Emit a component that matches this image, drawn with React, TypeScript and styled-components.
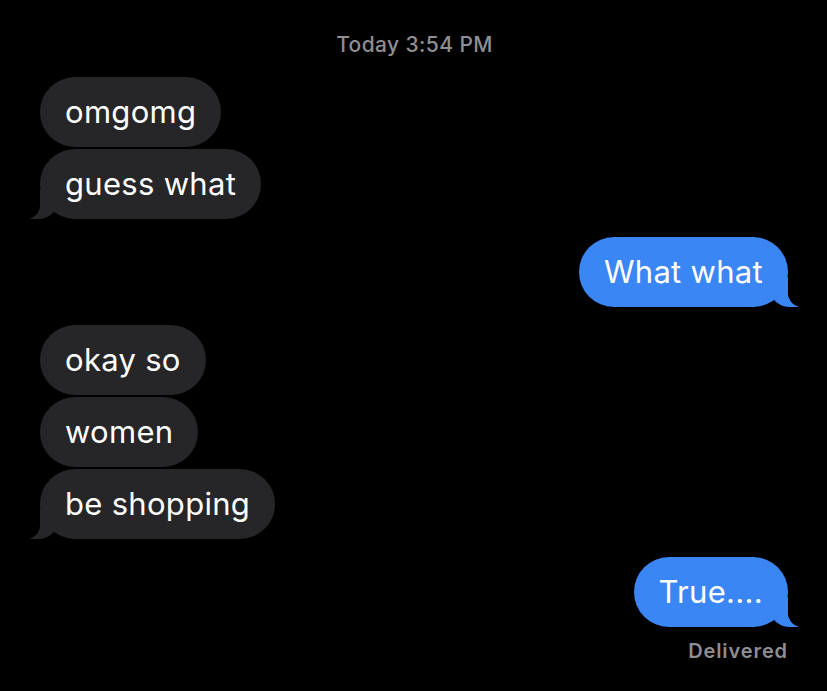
import { FC } from 'react';
import styled, { createGlobalStyle, css } from 'styled-components';

const GlobalStyle = createGlobalStyle`
  html, body {
    margin: 0;
    padding: 0;
    background: #000;
  }
  body {
    font-family: Inter, "Liberation Sans", sans-serif;
    -webkit-font-smoothing: antialiased;
  }
`;

const Screen = styled.div`
  width: 827px;
  height: 691px;
  background: #000;
  box-sizing: border-box;
  padding: 33px 39px 0 40px;
  display: flex;
  flex-direction: column;
  overflow: hidden;
`;

const Timestamp = styled.div`
  text-align: center;
  color: #8e8e93;
  font-size: 21px;
  font-weight: 500;
  letter-spacing: 0.4px;
  line-height: 24px;
  margin-bottom: 20px;
  margin-left: 1px;
`;

const Group = styled.div<{ $mine?: boolean }>`
  display: flex;
  flex-direction: column;
  align-items: ${p => (p.$mine ? 'flex-end' : 'flex-start')};
  gap: 2px;
  margin-bottom: 18px;
`;

const Bubble = styled.div<{ $mine?: boolean; $tail?: boolean }>`
  position: relative;
  height: 70px;
  box-sizing: border-box;
  padding: 0 25px 2px;
  border-radius: 35px;
  display: flex;
  align-items: center;
  font-size: 31px;
  color: #fff;
  letter-spacing: 0.3px;
  background: ${p => (p.$mine ? '#3b86f5' : '#262628')};

  ${p =>
    p.$tail &&
    !p.$mine &&
    css`
      &::before {
        content: '';
        position: absolute;
        bottom: 0;
        left: -10px;
        width: 28px;
        height: 30px;
        background: #262628;
        border-bottom-right-radius: 20px 18px;
      }
      &::after {
        content: '';
        position: absolute;
        bottom: 0;
        left: -30px;
        width: 30px;
        height: 32px;
        background: #000;
        border-bottom-right-radius: 14px;
      }
    `}

  ${p =>
    p.$tail &&
    p.$mine &&
    css`
      &::before {
        content: '';
        position: absolute;
        bottom: 0;
        right: -10px;
        width: 28px;
        height: 30px;
        background: #3b86f5;
        border-bottom-left-radius: 20px 18px;
      }
      &::after {
        content: '';
        position: absolute;
        bottom: 0;
        right: -30px;
        width: 30px;
        height: 32px;
        background: #000;
        border-bottom-left-radius: 14px;
      }
    `}
`;

const BubbleText = styled.span`
  position: relative;
  z-index: 1;
`;

const Status = styled.div`
  align-self: flex-end;
  color: #8e8e93;
  font-size: 20px;
  font-weight: 600;
  letter-spacing: 0.9px;
  margin-top: 10px;
  margin-right: 0;
`;

type Message = { text: string };
type Thread = { mine: boolean; messages: Message[] };

const threads: Thread[] = [
  { mine: false, messages: [{ text: 'omgomg' }, { text: 'guess what' }] },
  { mine: true, messages: [{ text: 'What what' }] },
  { mine: false, messages: [{ text: 'okay so' }, { text: 'women' }, { text: 'be shopping' }] },
  { mine: true, messages: [{ text: 'True....' }] },
];

const App: FC = () => {
  return (
    <>
      <GlobalStyle />
      <Screen>
        <Timestamp>Today 3:54 PM</Timestamp>
        {threads.map((thread, i) => (
          <Group key={i} $mine={thread.mine}>
            {thread.messages.map((msg, j) => (
              <Bubble key={j} $mine={thread.mine} $tail={j === thread.messages.length - 1}>
                <BubbleText>{msg.text}</BubbleText>
              </Bubble>
            ))}
            {i === threads.length - 1 && <Status>Delivered</Status>}
          </Group>
        ))}
      </Screen>
    </>
  );
};

export default App;
